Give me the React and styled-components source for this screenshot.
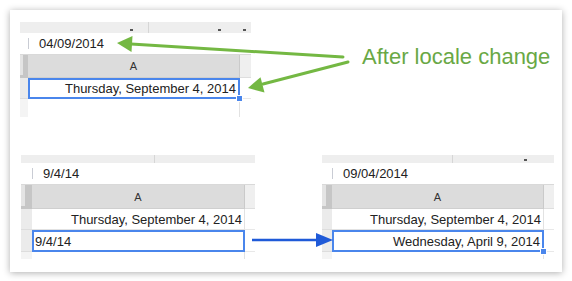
import styled, { createGlobalStyle } from "styled-components";

const GlobalStyle = createGlobalStyle`
  html, body {
    margin: 0;
    padding: 0;
    background: #ffffff;
  }
  body {
    font-family: "Liberation Sans", Arial, sans-serif;
  }
`;

const Page = () => {
  return (
    <Wrapper>
      <GlobalStyle />
      <Card>
        <TopRow>
          <Panel
            strip={11}
            divider={128}
            ticks={[110, 198, 223]}
            rowHead={8}
            col={212}
            extra={11}
            header={23}
            formula="04/09/2014"
            rows={[{ text: "Thursday, September 4, 2014", selected: true, h: 21 }]}
            tail={18}
          />
          <Label>After locale change</Label>
        </TopRow>
        <BottomRow>
          <Panel
            strip={8}
            divider={133}
            ticks={[]}
            rowHead={11}
            col={213}
            extra={10}
            header={24}
            formula="9/4/14"
            rows={[
              { text: "Thursday, September 4, 2014", h: 21 },
              { text: "9/4/14", selected: true, left: true, h: 22, noHandle: true },
            ]}
            tail={7}
            offset={1}
          />
          <Panel
            strip={8}
            divider={130}
            ticks={[202]}
            rowHead={10}
            col={212}
            extra={10}
            header={24}
            formula="09/04/2014"
            rows={[
              { text: "Thursday, September 4, 2014", h: 21 },
              { text: "Wednesday, April 9, 2014", selected: true, h: 22 },
            ]}
            tail={7}
          />
        </BottomRow>
        <Arrows width="552" height="262" viewBox="0 0 552 262">
          <g stroke="#74b843" strokeWidth="3" strokeLinecap="round" fill="#74b843">
            <line x1="333" y1="47" x2="121" y2="34" />
            <polygon points="107,33 122.5,25.9 121.5,41.9" stroke="none" />
            <line x1="338" y1="52" x2="253" y2="74" />
            <polygon points="238,78 254.5,82.6 250.5,67.2" stroke="none" />
          </g>
          <g stroke="#1f5ad8" strokeWidth="2.5" fill="#1f5ad8">
            <line x1="242" y1="230" x2="307" y2="230" />
            <polygon points="323,230 306,223 306,237" stroke="none" />
          </g>
        </Arrows>
      </Card>
    </Wrapper>
  );
};

const Panel = ({ strip, divider, ticks, rowHead, col, extra, header, formula, rows, tail, offset = 0 }) => {
  return (
    <PanelBox $offset={offset}>
      <Strip $h={strip}>
        <StripSection $w={divider} />
        {ticks.map((t) => (
          <Tick key={t} $x={t} />
        ))}
      </Strip>
      <FormulaBar $pad={rowHead}>
        <Mark />
        <FormulaText>{formula}</FormulaText>
      </FormulaBar>
      <GridRow $h={header}>
        <Corner $w={rowHead} />
        <ColHeader $w={col}>A</ColHeader>
        <ExtraHeader $w={extra} />
      </GridRow>
      {rows.map((r, i) => (
        <GridRow key={i} $h={r.h}>
          <RowHead $w={rowHead} />
          <Cell $w={col} $selected={r.selected} $left={r.left}>
            {r.text}
            {r.selected && !r.noHandle && <Handle />}
          </Cell>
          <ExtraCell $w={extra} />
        </GridRow>
      ))}
      <GridRow $h={tail}>
        <TailHead $w={rowHead} />
        <TailCell $w={col} />
      </GridRow>
    </PanelBox>
  );
};

export default Page;

const Wrapper = styled.div`
  padding: 10px;
  width: 572px;
  height: 281px;
  box-sizing: border-box;
`;

const Card = styled.div`
  position: relative;
  width: 552px;
  height: 262px;
  box-sizing: border-box;
  padding: 12px 10px 0;
  background: #ffffff;
  box-shadow: 0 1px 7px rgba(0, 0, 0, 0.32);
`;

const TopRow = styled.div`
  display: flex;
  align-items: flex-start;
`;

const BottomRow = styled.div`
  display: flex;
  align-items: flex-start;
  gap: 67px;
  margin-top: 38px;
`;

const Label = styled.div`
  margin: 22px 0 0 111px;
  font-size: 22px;
  line-height: 26px;
  color: #69a845;
  white-space: nowrap;
`;

const PanelBox = styled.div`
  display: flex;
  flex-direction: column;
  margin-left: ${(p) => p.$offset}px;
  color: #222222;
  font-size: 13px;
`;

const Strip = styled.div`
  position: relative;
  display: flex;
  height: ${(p) => p.$h}px;
  background: #eeeeee;
`;

const StripSection = styled.div`
  width: ${(p) => p.$w}px;
  border-right: 1px solid #d6d6d6;
`;

const Tick = styled.span`
  position: absolute;
  left: ${(p) => p.$x}px;
  bottom: 2px;
  width: 3px;
  height: 2px;
  background: #555555;
`;

const FormulaBar = styled.div`
  display: flex;
  align-items: center;
  gap: 10px;
  height: 22px;
  padding-left: ${(p) => p.$pad}px;
  background: #ffffff;
  border-bottom: 1px solid #d9d9d9;
  box-sizing: border-box;
`;

const Mark = styled.span`
  width: 1px;
  height: 11px;
  background: #c9ccd4;
`;

const FormulaText = styled.span`
  line-height: 22px;
`;

const GridRow = styled.div`
  display: flex;
  height: ${(p) => p.$h}px;
`;

const Corner = styled.div`
  width: ${(p) => p.$w}px;
  box-sizing: border-box;
  background: linear-gradient(to right, #e4e4e4 0 40%, #c6c6c6 40%);
  border-bottom: 3px solid #c6c6c6;
`;

const ColHeader = styled.div`
  width: ${(p) => p.$w}px;
  box-sizing: border-box;
  display: flex;
  align-items: center;
  justify-content: center;
  background: #dcdcdc;
  border-right: 1px solid #cacaca;
  border-bottom: 1px solid #cfcfcf;
  font-size: 11px;
  color: #333333;
`;

const ExtraHeader = styled.div`
  width: ${(p) => p.$w}px;
  background: #efefef;
  border-bottom: 1px solid #dedede;
  box-sizing: border-box;
`;

const RowHead = styled.div`
  width: ${(p) => p.$w}px;
  box-sizing: border-box;
  background: #ebebeb;
  border-bottom: 1px solid #dddddd;
`;

const Cell = styled.div`
  position: relative;
  width: ${(p) => p.$w}px;
  box-sizing: border-box;
  display: flex;
  align-items: center;
  justify-content: ${(p) => (p.$left ? "flex-start" : "flex-end")};
  padding: ${(p) => (p.$left ? "0 0 0 1px" : "0 2px 0 0")};
  background: #ffffff;
  border: ${(p) => (p.$selected ? "2px solid #4a86ec" : "none")};
  border-bottom: ${(p) => (p.$selected ? "2px solid #4a86ec" : "1px solid #e2e2e2")};
  border-right: ${(p) => (p.$selected ? "2px solid #4a86ec" : "1px solid #e2e2e2")};
  white-space: nowrap;
`;

const Handle = styled.span`
  position: absolute;
  right: -5px;
  bottom: -5px;
  width: 7px;
  height: 7px;
  background: #4a86ec;
  border: 1px solid #ffffff;
  box-sizing: border-box;
`;

const ExtraCell = styled.div`
  width: ${(p) => p.$w}px;
  background: #ffffff;
  border-bottom: 1px solid #e8e8e8;
  box-sizing: border-box;
`;

const TailHead = styled.div`
  width: ${(p) => p.$w}px;
  background: #f4f4f4;
`;

const TailCell = styled.div`
  width: ${(p) => p.$w}px;
  box-sizing: border-box;
  border-right: 1px solid #e2e2e2;
`;

const Arrows = styled.svg`
  position: absolute;
  left: 0;
  top: 0;
  pointer-events: none;
  overflow: visible;
`;
